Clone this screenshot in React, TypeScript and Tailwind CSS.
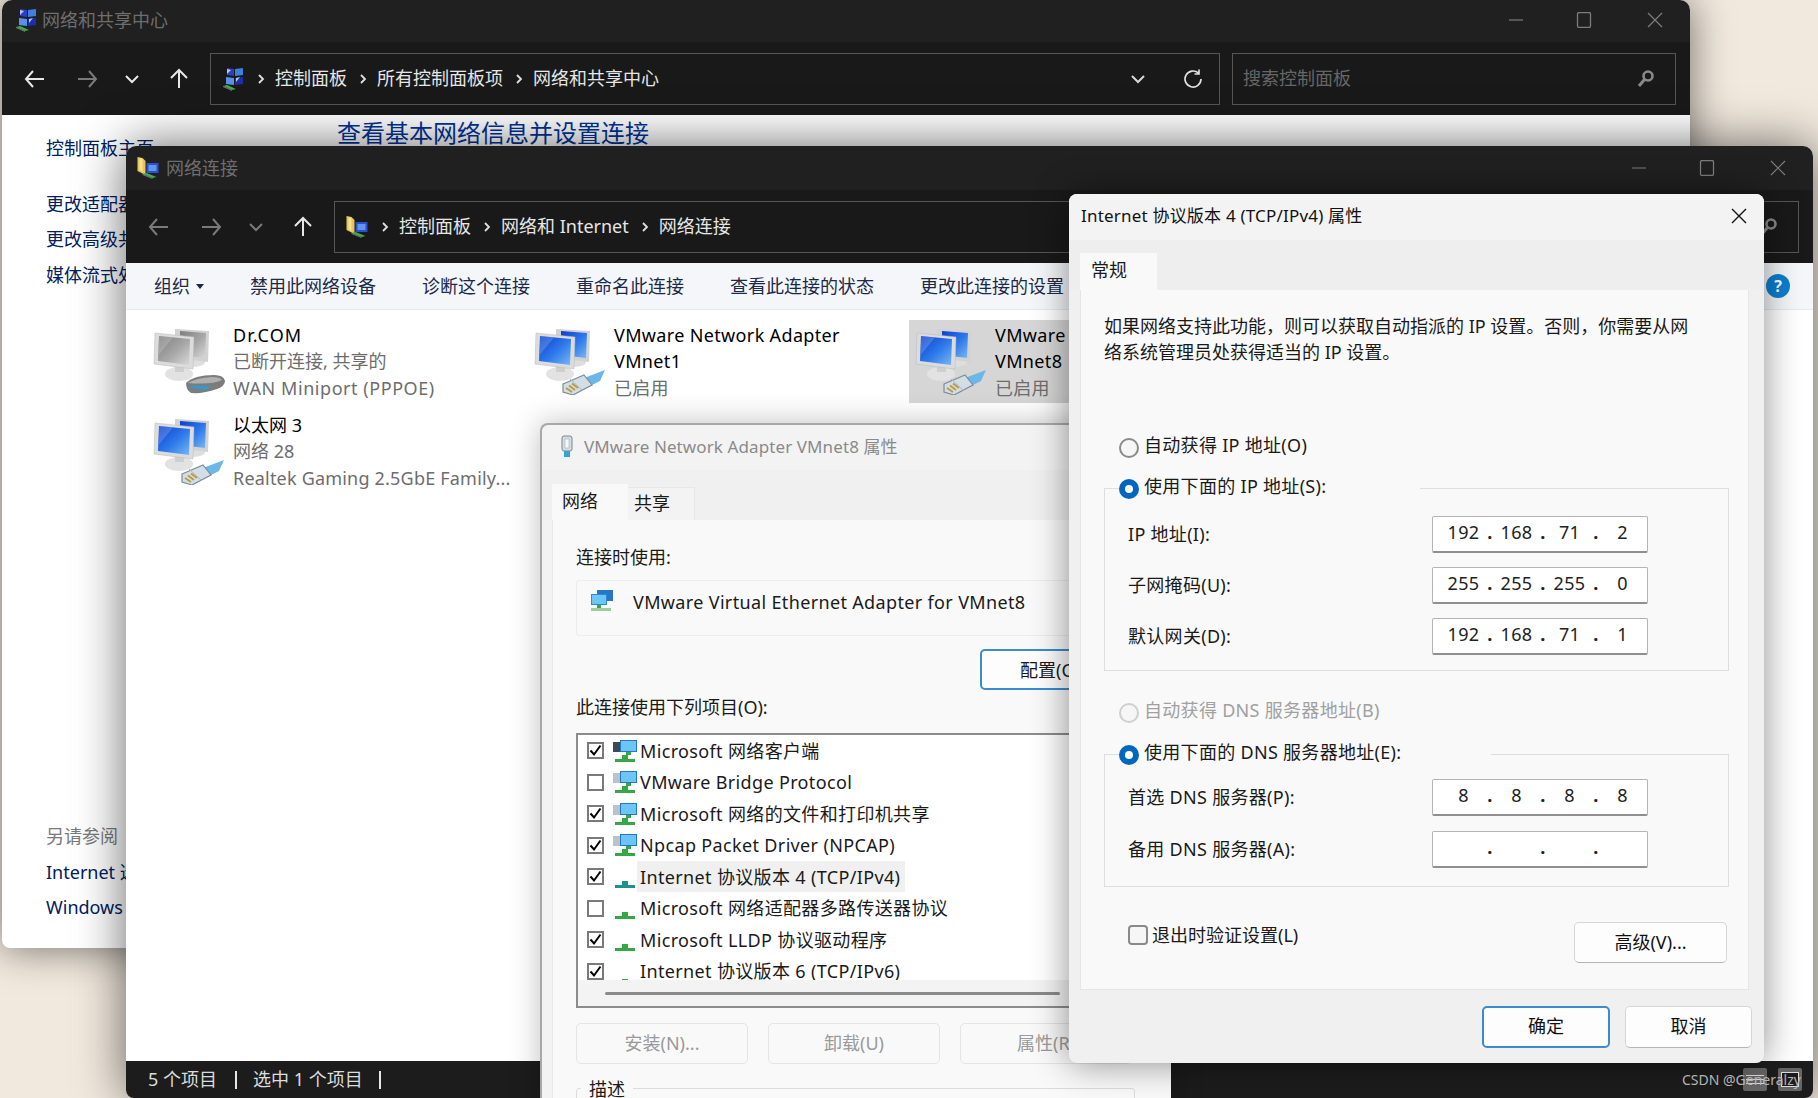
import type { ReactNode } from "react";

function PanelIcon() {
  return (
    <svg viewBox="0 0 22 24" className="h-[24px] w-[24px] shrink-0">
      <path d="M5 1l7 1v7l-7-1z" fill="#2a3fc4" />
      <path d="M13 2l8-1v7l-8 1z" fill="#3f7fe0" />
      <path d="M4 10l8 1v7l-8-1z" fill="#5a90e8" />
      <path d="M13 11l8-1v7l-8 1z" fill="#1d2fa8" />
      <path d="M5 2l4 1-4 4zM14 11l4-1-4 5z" fill="#dce8ff" opacity="0.8" />
      <path d="M1 19l9 4 4-1-9-4z" fill="#3fae49" />
      <path d="M1 20l9 4v-1l-9-4z" fill="#777" />
    </svg>
  );
}

function FolderNetIcon() {
  return (
    <svg viewBox="0 0 23 24" className="h-[24px] w-[24px] shrink-0">
      <path d="M1 1l5 1 3 3v14l-8-4z" fill="#e6c65c" />
      <path d="M3 2l3 1v13l-3-2z" fill="#f5e08f" />
      <rect x="10" y="7" width="12" height="10" fill="#2b4fd0" />
      <rect x="12" y="9" width="8" height="6" fill="#5f96ee" />
      <path d="M6 18l10 4 4-1-10-4z" fill="#3fae49" />
      <path d="M6 19l10 4v-1l-10-4z" fill="#777" />
    </svg>
  );
}

function Monitors({ gray = false, id }: { gray?: boolean; id: string }) {
  const a = gray ? "#7d7d7d" : "#0a3fd0";
  const b = gray ? "#d9d9d9" : "#7ab8f5";
  return (
    <svg viewBox="0 0 72 66" className="absolute left-0 top-0 h-[66px] w-[72px]">
      <defs>
        <linearGradient id={id} x1="0" y1="0" x2="1" y2="1">
          <stop offset="0" stopColor={a} />
          <stop offset="0.55" stopColor={gray ? "#a8a8a8" : "#2f7bea"} />
          <stop offset="1" stopColor={b} />
        </linearGradient>
      </defs>
      <ellipse cx="40" cy="33" rx="12" ry="5" fill="#dedede" />
      <path d="M22 0l34 2-1 31-33-4z" fill="#d2d2d2" />
      <path d="M27 2l26 2-1 25-25-3z" fill={`url(#${id})`} />
      <ellipse cx="26" cy="45" rx="14" ry="7" fill="#e2e2e2" />
      <rect x="22" y="35" width="9" height="8" fill="#cfcfcf" />
      <path d="M2 4l39 4-1 32-39-5z" fill="#dcdcdc" stroke="#b9b9b9" strokeWidth="0.5" />
      <path d="M6 7l31 3-1 26-31-4z" fill={`url(#${id})`} />
      <path d="M6 7l14 1.5-14 17z" fill="#fff" opacity="0.18" />
    </svg>
  );
}

function Plug() {
  return (
    <svg viewBox="0 0 72 66" className="absolute left-0 top-0 h-[66px] w-[72px]">
      <path d="M50 49l21-8-5 11-12 6z" fill="#6db6e8" />
      <path d="M29 55l21-9 8 10-19 10-10-3z" fill="#d3dde4" stroke="#7c8c9c" strokeWidth="1.2" />
      <path d="M36 50l13 12" stroke="#a9b7c3" strokeWidth="1" />
      <path d="M32 59l6 4M35 56.5l6 4.5M38 54.5l6 4.5" stroke="#b99a3c" strokeWidth="1.8" />
    </svg>
  );
}

function Modem() {
  return (
    <svg viewBox="0 0 72 66" className="absolute left-0 top-0 h-[66px] w-[72px]">
      <path d="M33 54q8-8 28-8 10 0 11 6 0 5-8 8-14 5-26 4-5-3-5-10z" fill="#7c7c7c" />
      <path d="M35 54q8-5 24-6 8 0 10 3-10 5-34 3z" fill="#b0b0b0" />
      <path d="M35 57l22 0-2 3q-12 1-20-3z" fill="#2d9bd6" />
    </svg>
  );
}

function SmallNet({ kind }: { kind: "client" | "service" | "v4" | "proto" | "dot" }) {
  const green = kind === "v4" ? "#1f8f8f" : "#34a845";
  return (
    <svg viewBox="0 0 24 24" className="h-[24px] w-[24px] shrink-0">
      {(kind === "client" || kind === "service") && (
        <>
          <path d="M0 3h8v10H0z" fill={kind === "client" ? "#3c4a55" : "#b9c3cb"} />
          <rect x="7" y="1" width="17" height="12" fill="#2577c8" />
          <rect x="8" y="2" width="15" height="10" fill="#6cc5f5" />
          <rect x="13" y="13" width="5" height="3" fill="#34a845" />
        </>
      )}
      {kind === "dot" ? (
        <rect x="9" y="20" width="6" height="4" fill={green} />
      ) : (
        <>
          <rect x="9" y="16" width="6" height="4" fill={green} />
          <path d="M2 20h20v3H2z" fill={green} />
        </>
      )}
    </svg>
  );
}

function WinControls() {
  const c = "#7c7c7c";
  return (
    <div className="flex items-center pr-[27px]">
      <svg width="16" height="16" viewBox="0 0 16 16">
        <path d="M1 8h14" stroke={c} strokeWidth="1.2" />
      </svg>
      <svg width="16" height="16" viewBox="0 0 16 16" className="ml-[52px]">
        <rect x="1.5" y="0.5" width="13" height="15" rx="1.5" fill="none" stroke={c} strokeWidth="1.3" />
      </svg>
      <svg width="16" height="16" viewBox="0 0 16 16" className="ml-[55px]">
        <path d="M1 1l14 14M15 1L1 15" stroke={c} strokeWidth="1.2" />
      </svg>
    </div>
  );
}

function Arrow({ dir, color }: { dir: "left" | "right" | "up"; color: string }) {
  const d =
    dir === "left"
      ? "M9 3L2 11l7 8M2 11h18"
      : dir === "right"
        ? "M13 3l7 8-7 8M20 11H2"
        : "M3 10l8-8 8 8M11 2v18";
  return (
    <svg width="22" height="22" viewBox="0 0 22 22" className="shrink-0">
      <path d={d} fill="none" stroke={color} strokeWidth="2" />
    </svg>
  );
}

function Chevron({ color }: { color: string }) {
  return (
    <svg width="22" height="22" viewBox="0 0 22 22" className="shrink-0">
      <path d="M5 8l6 6 6-6" fill="none" stroke={color} strokeWidth="2" />
    </svg>
  );
}

function Crumbs({ items }: { items: string[] }) {
  return (
    <>
      {items.map((t) => (
        <span key={t} className="flex items-center">
          <svg width="8" height="12" viewBox="0 0 8 12" className="ml-[12px] mr-[10px]">
            <path d="M2 2l4 4-4 4" fill="none" stroke="#e0e0e0" strokeWidth="1.8" />
          </svg>
          <span className="text-[18px] text-[#e6e6e6] whitespace-nowrap">{t}</span>
        </span>
      ))}
    </>
  );
}

function NavBar({ crumbs, icon, back }: { crumbs: string[]; icon: ReactNode; back: string }) {
  return (
    <div className="flex h-[73px] items-center bg-[#191919] pl-[22px] pr-[14px]">
      <Arrow dir="left" color={back} />
      <div className="ml-[30px]">
        <Arrow dir="right" color="#7a7a7a" />
      </div>
      <div className="ml-[23px]">
        <Chevron color={back} />
      </div>
      <div className="ml-[25px]">
        <Arrow dir="up" color="#e8e8e8" />
      </div>
      <div className="ml-[20px] flex h-[52px] flex-1 items-center border border-[#555] pl-[10px] pr-[15px]">
        {icon}
        <Crumbs items={crumbs} />
        <div className="ml-auto flex items-center gap-[33px]">
          <Chevron color="#d8d8d8" />
          <svg width="22" height="22" viewBox="0 0 22 22">
            <path d="M19 11a8 8 0 1 1-2.5-5.8M17 1.5v4.5h-4.5" fill="none" stroke="#e0e0e0" strokeWidth="1.7" />
          </svg>
        </div>
      </div>
      <div className="ml-[12px] flex h-[52px] w-[444px] items-center justify-between border border-[#555] pl-[10px] pr-[20px]">
        <span className="text-[18px] text-[#666]">搜索控制面板</span>
        <svg width="18" height="20" viewBox="0 0 18 20">
          <circle cx="11" cy="7" r="4.5" fill="none" stroke="#8a8a8a" strokeWidth="2.6" />
          <path d="M7.5 10.5L2 17" stroke="#8a8a8a" strokeWidth="3" />
        </svg>
      </div>
    </div>
  );
}

function Item({
  name,
  line2,
  line3,
  net,
  selected = false,
  id,
  gray = false,
  nameClass = "tracking-[0.35px]",
  line3Class = "tracking-[0.2px]",
}: {
  name: string[];
  line2?: string;
  line3: string;
  net: "plug" | "modem";
  selected?: boolean;
  id: string;
  gray?: boolean;
  nameClass?: string;
  line3Class?: string;
}) {
  return (
    <div className={`flex h-[83px] items-center ${selected ? "-ml-[2px] bg-[#d6d6d6] pl-[6px]" : "pl-[4px]"}`}>
      <div className="relative h-[66px] w-[72px] shrink-0">
        <Monitors id={id} gray={gray} />
        {net === "plug" ? <Plug /> : <Modem />}
      </div>
      <div className="ml-[8px] text-[18px] leading-[26.5px] whitespace-nowrap">
        {name.map((n) => (
          <div key={n} className={`text-black ${nameClass}`}>
            {n}
          </div>
        ))}
        {line2 && <div className="text-[#6d6d6d]">{line2}</div>}
        <div className={`text-[#6d6d6d] ${line3Class}`}>{line3}</div>
      </div>
    </div>
  );
}

function Check({ on }: { on: boolean }) {
  return (
    <span className="flex h-[17px] w-[17px] shrink-0 items-center justify-center border-2 border-[#7a7a7a] bg-white">
      {on && (
        <svg width="13" height="13" viewBox="0 0 13 13">
          <path d="M1.5 6.5l3.5 4 6.5-9" fill="none" stroke="#000" strokeWidth="2" />
        </svg>
      )}
    </span>
  );
}

function Radio({ on = false, disabled = false }: { on?: boolean; disabled?: boolean }) {
  if (on) {
    return (
      <span className="flex h-[20px] w-[20px] shrink-0 items-center justify-center rounded-full bg-[#0067c0]">
        <span className="h-[8px] w-[8px] rounded-full bg-white" />
      </span>
    );
  }
  return (
    <span
      className={`mt-[5px] h-[20px] w-[20px] shrink-0 rounded-full border-2 bg-[#f6f6f6] ${disabled ? "border-[#cfcfcf]" : "border-[#8a8a8a]"}`}
    />
  );
}

function IpField({ value }: { value: string[] }) {
  return (
    <div className="flex h-[37px] w-[216px] items-start rounded-[2px] border border-[#b4b4b4] border-b-2 border-b-[#8f8f8f] bg-white pl-[10px] pt-[2px] text-[18px] leading-[26px] tracking-[0.3px] text-[#222]">
      {value.map((v, i) => (
        <span key={i} className="flex">
          <span className="w-[41px] text-center">{v}</span>
          {i < 3 && <span className="w-[12px] text-center font-bold">.</span>}
        </span>
      ))}
    </div>
  );
}

function FieldRow({ label, value }: { label: string; value: string[] }) {
  return (
    <div className="flex items-center">
      <span className="w-[327px] pb-[2px] pl-[23px] tracking-[0.3px] text-[#1a1a1a]">{label}</span>
      <IpField value={value} />
    </div>
  );
}

function Btn({ label, className = "" }: { label: string; className?: string }) {
  return (
    <button
      className={`flex items-center justify-center rounded-[5px] border border-[#d6d6d6] border-b-[#b5b5b5] bg-[#fdfdfd] text-[18px] text-[#111] ${className}`}
    >
      {label}
    </button>
  );
}

const listRows: { on: boolean; kind: "client" | "service" | "v4" | "proto" | "dot"; text: string; hl?: boolean }[] = [
  { on: true, kind: "client", text: "Microsoft 网络客户端" },
  { on: false, kind: "service", text: "VMware Bridge Protocol" },
  { on: true, kind: "service", text: "Microsoft 网络的文件和打印机共享" },
  { on: true, kind: "service", text: "Npcap Packet Driver (NPCAP)" },
  { on: true, kind: "v4", text: "Internet 协议版本 4 (TCP/IPv4)", hl: true },
  { on: false, kind: "proto", text: "Microsoft 网络适配器多路传送器协议" },
  { on: true, kind: "proto", text: "Microsoft LLDP 协议驱动程序" },
  { on: true, kind: "dot", text: "Internet 协议版本 6 (TCP/IPv6)" },
];

function BackWindow() {
  return (
    <div className="absolute left-[2px] top-0 flex h-[948px] w-[1688px] flex-col overflow-hidden rounded-b-[8px] rounded-t-[10px] bg-white shadow-[0_0_40px_rgba(0,0,0,0.55)]">
      <div className="flex h-[42px] items-center justify-between bg-[#202020] pl-[12px] pb-[2px]">
        <div className="flex items-center gap-[4px] text-[18px] text-[#6e6e6e]">
          <PanelIcon />
          网络和共享中心
        </div>
        <WinControls />
      </div>
      <NavBar back="#e8e8e8" icon={<PanelIcon />} crumbs={["控制面板", "所有控制面板项", "网络和共享中心"]} />
      <div className="flex flex-1">
        <div className="flex w-[335px] flex-col pb-[28px] pl-[44px] pt-[20px] text-[18px] leading-[26px] text-[#002060]">
          <div>控制面板主页</div>
          <div className="mt-[30px]">更改适配器设置</div>
          <div className="mt-[9px]">更改高级共享设置</div>
          <div className="mt-[10px]">媒体流式处理选项</div>
          <div className="mt-auto text-[#7a7a7a]">另请参阅</div>
          <div className="mt-[9.5px]">Internet 选项</div>
          <div className="mt-[9.5px]">Windows Defender 防火墙</div>
        </div>
        <div className="pt-[2px] text-[24px] leading-[32px] text-[#003399]">查看基本网络信息并设置连接</div>
      </div>
    </div>
  );
}

function FrontWindow() {
  const cmds = ["禁用此网络设备", "诊断这个连接", "重命名此连接", "查看此连接的状态", "更改此连接的设置"];
  return (
    <div className="absolute left-[126px] top-[146px] flex h-[952px] w-[1687px] flex-col overflow-hidden rounded-t-[10px] rounded-b-[8px] bg-white shadow-[0_0_50px_rgba(0,0,0,0.6)]">
      <div className="flex h-[44px] shrink-0 items-center justify-between bg-[#202020] pl-[10px]">
        <div className="flex items-center gap-[6px] text-[18px] text-[#6e6e6e]">
          <FolderNetIcon />
          网络连接
        </div>
        <WinControls />
      </div>
      <NavBar back="#7a7a7a" icon={<FolderNetIcon />} crumbs={["控制面板", "网络和 Internet", "网络连接"]} />
      <div className="flex h-[47px] shrink-0 items-center gap-[46px] border-b border-[#e8eaee] bg-[#f4f6f9] pl-[28px] pr-[23px] text-[18px] text-[#1b2a4a]">
        <span className="flex w-[50px] items-center gap-[6px]">
          组织
          <span className="h-0 w-0 border-x-[4px] border-t-[5px] border-x-transparent border-t-[#1b2a4a]" />
        </span>
        {cmds.map((c) => (
          <span key={c} className="whitespace-nowrap">
            {c}
          </span>
        ))}
        <span className="ml-auto flex h-[24px] w-[24px] items-center justify-center rounded-full bg-[#0d7fd1] text-[16px] font-bold text-white">
          ?
        </span>
      </div>
      <div className="grid flex-1 grid-cols-[381px_381px_381px] content-start gap-y-[7px] pl-[23px] pt-[10px]">
        <Item
          id="m1"
          gray
          net="modem"
          name={["Dr.COM"]}
          nameClass="tracking-[1px]"
          line2="已断开连接, 共享的"
          line3="WAN Miniport (PPPOE)"
          line3Class="tracking-[0.55px]"
        />
        <Item id="m2" net="plug" name={["VMware Network Adapter", "VMnet1"]} line3="已启用" />
        <Item id="m3" net="plug" selected name={["VMware Network Adapter", "VMnet8"]} line3="已启用" />
        <Item
          id="m4"
          net="plug"
          name={["以太网 3"]}
          nameClass=""
          line2="网络 28"
          line3="Realtek Gaming 2.5GbE Family..."
        />
      </div>
      <div className="flex h-[37px] shrink-0 items-center bg-[#1c1c1c] pl-[22px] pr-[11px] text-[18px] text-[#dcdcdc]">
        <span>5 个项目</span>
        <span className="ml-[18px] h-[18px] w-[2px] bg-[#e6e6e6]" />
        <span className="ml-[16px]">选中 1 个项目</span>
        <span className="ml-[16px] h-[18px] w-[2px] bg-[#e6e6e6]" />
        <div className="ml-auto flex gap-[11px]">
          <span className="flex h-[23px] w-[24px] flex-col justify-center gap-[3px] rounded-[2px] bg-[#666] px-[3px]">
            <span className="h-[1px] bg-[#ddd]" />
            <span className="h-[1px] bg-[#ddd]" />
            <span className="h-[1px] bg-[#ddd]" />
          </span>
          <span className="flex h-[23px] w-[24px] items-center justify-center rounded-[2px] bg-[#666]">
            <span className="h-[15px] w-[18px] border border-[#ddd] bg-[#1c1c1c]" />
          </span>
        </div>
      </div>
    </div>
  );
}

function VmDialog() {
  return (
    <div className="absolute left-[540px] top-[423px] flex h-[700px] w-[631px] flex-col overflow-hidden rounded-t-[8px] border-l-2 border-t-2 border-[#a8a8a8] bg-[#f3f3f3] shadow-[0_0_30px_rgba(0,0,0,0.25)]">
      <div className="flex h-[45px] shrink-0 items-center pb-[2px] pl-[17px] text-[17px] tracking-[0.1px] text-[#8a8a8a]">
        <svg width="16" height="24" viewBox="0 0 16 24" className="mr-[9px]">
          <rect x="3" y="1" width="10" height="15" rx="2" fill="#d6dde2" stroke="#7a8791" />
          <rect x="6" y="4" width="4" height="9" fill="#f5f7f8" stroke="#9aa6ae" strokeWidth="0.5" />
          <rect x="5" y="16" width="6" height="6" fill="#3aa0dc" />
        </svg>
        VMware Network Adapter VMnet8 属性
      </div>
      <div className="flex h-[50px] shrink-0 items-end bg-[#f0f0f0] pl-[10px] text-[18px] text-[#1a1a1a]">
        <div className="flex h-[36px] w-[76px] items-center bg-[#f9f9f9] pb-[2px] pl-[10px]">网络</div>
        <div className="flex h-[33px] w-[67px] items-center border-r border-t border-[#e6e6e6] bg-[#f3f3f3] pb-[1px] pl-[6px]">共享</div>
      </div>
      <div className="ml-[10px] flex-1 border-l border-[#e8e8e8] bg-[#f9f9f9] pl-[23px] pt-[24px] text-[18px] leading-[26px] text-[#1a1a1a]">
        <div>连接时使用:</div>
        <div className="mt-[10px] flex h-[56px] w-[559px] items-start rounded-[3px] border border-[#ececec] pl-[13px] pt-[9px]">
          <svg width="24" height="22" viewBox="0 0 24 22" className="shrink-0">
            <rect x="7" y="0" width="16" height="11" fill="#2576c4" />
            <rect x="1" y="4" width="16" height="11" fill="#2c8ad8" />
            <rect x="2" y="5" width="14" height="9" fill="#6cc5f5" />
            <rect x="7" y="15" width="4" height="3" fill="#34a845" />
            <rect x="1" y="18" width="20" height="3" fill="#9ccf9f" />
          </svg>
          <span className="ml-[19px] mt-[-1px] whitespace-nowrap tracking-[0.35px]">VMware Virtual Ethernet Adapter for VMnet8</span>
        </div>
        <button className="ml-[404px] mt-[13px] flex h-[41px] w-[172px] items-center justify-start rounded-[5px] border-2 border-[#3a8bd0] bg-[#fdfdfd] pl-[38px]">
          配置(C)...
        </button>
        <div className="mt-[4px]">此连接使用下列项目(O):</div>
        <div className="mt-[13px] w-[559px] border-2 border-[#8c8c8c] bg-white">
          <div className="h-[245px] overflow-hidden">
            {listRows.map((r) => (
              <div key={r.text} className="flex h-[31.5px] items-center pl-[9px] tracking-[0.35px]">
                <Check on={r.on} />
                <span className="ml-[9px]">
                  <SmallNet kind={r.kind} />
                </span>
                <span className={`flex h-[31px] items-center pl-[3px] pr-[5px] whitespace-nowrap ${r.hl ? "bg-[#f0f0f0]" : ""}`}>
                  {r.text}
                </span>
              </div>
            ))}
          </div>
          <div className="flex h-[26px] items-center bg-[#f3f3f3] pl-[27px]">
            <div className="h-[3px] w-[455px] rounded-full bg-[#8a8a8a]" />
          </div>
        </div>
        <div className="mt-[15px] flex gap-[20px]">
          <button className="flex h-[41px] w-[172px] items-center justify-center rounded-[5px] border border-[#e4e4e4] pb-[2px] text-[#9a9a9a]">安装(N)...</button>
          <button className="flex h-[41px] w-[172px] items-center justify-center rounded-[5px] border border-[#e4e4e4] pb-[2px] text-[#9a9a9a]">卸载(U)</button>
          <button className="flex h-[41px] w-[172px] items-center justify-center rounded-[5px] border border-[#e4e4e4] pb-[2px] text-[#9a9a9a]">属性(R)</button>
        </div>
        <div className="relative mt-[24px] h-[80px] w-[559px] rounded-[3px] border border-[#dcdcdc]">
          <span className="absolute -top-[13px] left-[4px] bg-[#f9f9f9] px-[8px]">描述</span>
        </div>
      </div>
    </div>
  );
}

function Ipv4Dialog() {
  return (
    <div className="absolute left-[1069px] top-[194px] flex h-[869px] w-[695px] flex-col overflow-hidden rounded-[8px] bg-[#f0f0f0] shadow-[0_0_36px_rgba(0,0,0,0.45)]">
      <div className="flex h-[46px] shrink-0 items-center justify-between bg-[#f3f3f3] pb-[2px] pl-[12px] pr-[17px] text-[17px] tracking-[0.2px] text-[#111]">
        Internet 协议版本 4 (TCP/IPv4) 属性
        <svg width="16" height="16" viewBox="0 0 16 16">
          <path d="M1 1l14 14M15 1L1 15" stroke="#111" strokeWidth="1.4" />
        </svg>
      </div>
      <div className="flex h-[50px] shrink-0 items-end bg-[#eeeeee] pl-[11px]">
        <div className="flex h-[37px] w-[77px] items-center bg-[#f9f9f9] pb-[2px] pl-[11px] text-[18px] text-[#1a1a1a]">常规</div>
      </div>
      <div className="mx-[11px] mr-[15px] h-[700px] shrink-0 border border-t-0 border-[#e6e6e6] bg-[#f9f9f9] pl-[23px] pr-[19px] pt-[24px] text-[18px] leading-[26px] text-[#1a1a1a]">
        <p className="whitespace-nowrap leading-[25.5px]">
          如果网络支持此功能，则可以获取自动指派的 IP 设置。否则，你需要从网
          <br />
          络系统管理员处获得适当的 IP 设置。
        </p>
        <div className="ml-[15px] mt-[68px] flex h-[26px] gap-[5px] leading-[24px] tracking-[0.3px]">
          <Radio />
          自动获得 IP 地址(O)
        </div>
        <div className="relative mt-[29px] h-[183px] w-[625px] border border-[#dedede] pt-[27px]">
          <div className="absolute -top-[16px] left-[14px] flex h-[26px] w-[301px] items-start gap-[5px] bg-[#f9f9f9] tracking-[0.3px]">
            <span className="mt-[6px]">
              <Radio on />
            </span>
            使用下面的 IP 地址(S):
          </div>
          <div className="flex flex-col gap-[14px]">
            <FieldRow label="IP 地址(I):" value={["192", "168", "71", "2"]} />
            <FieldRow label="子网掩码(U):" value={["255", "255", "255", "0"]} />
            <FieldRow label="默认网关(D):" value={["192", "168", "71", "1"]} />
          </div>
        </div>
        <div className="ml-[15px] mt-[27px] flex h-[26px] gap-[5px] leading-[24px] tracking-[0.3px] text-[#a0a0a0]">
          <Radio disabled />
          自动获得 DNS 服务器地址(B)
        </div>
        <div className="relative mt-[30px] h-[133px] w-[625px] border border-[#dedede] pt-[24px]">
          <div className="absolute -top-[16px] left-[14px] flex h-[26px] w-[372px] items-start gap-[5px] bg-[#f9f9f9] tracking-[0.3px]">
            <span className="mt-[6px]">
              <Radio on />
            </span>
            使用下面的 DNS 服务器地址(E):
          </div>
          <div className="flex flex-col gap-[15px]">
            <FieldRow label="首选 DNS 服务器(P):" value={["8", "8", "8", "8"]} />
            <FieldRow label="备用 DNS 服务器(A):" value={["", "", "", ""]} />
          </div>
        </div>
        <div className="mt-[35px] flex w-[623px] items-start justify-between">
          <div className="ml-[24px] mt-[1px] flex items-center gap-[4px] leading-[24px]">
            <span className="h-[20px] w-[20px] rounded-[4px] border-2 border-[#8a8a8a] bg-[#f6f6f6]" />
            退出时验证设置(L)
          </div>
          <Btn label="高级(V)..." className="h-[41px] w-[153px] pb-[2px]" />
        </div>
      </div>
      <div className="flex justify-end gap-[15px] pr-[12px] pt-[16px]">
        <button className="flex h-[42px] w-[128px] items-center justify-center rounded-[5px] border-2 border-[#3a8bd0] bg-[#fdfdfd] pb-[2px] text-[18px] text-[#111]">
          确定
        </button>
        <Btn label="取消" className="h-[42px] w-[127px] pb-[2px]" />
      </div>
    </div>
  );
}

export default function App() {
  return (
    <div
      lang="zh-CN"
      className="relative h-[1098px] w-[1818px] overflow-hidden bg-[#f1e9de] font-['Noto_Sans','Noto_Sans_CJK_SC',sans-serif]"
    >
      <BackWindow />
      <FrontWindow />
      <VmDialog />
      <Ipv4Dialog />
      <span className="absolute left-[1682px] top-[1069px] text-[14px] text-[#b4b4b4]">CSDN @Generalzy</span>
    </div>
  );
}
